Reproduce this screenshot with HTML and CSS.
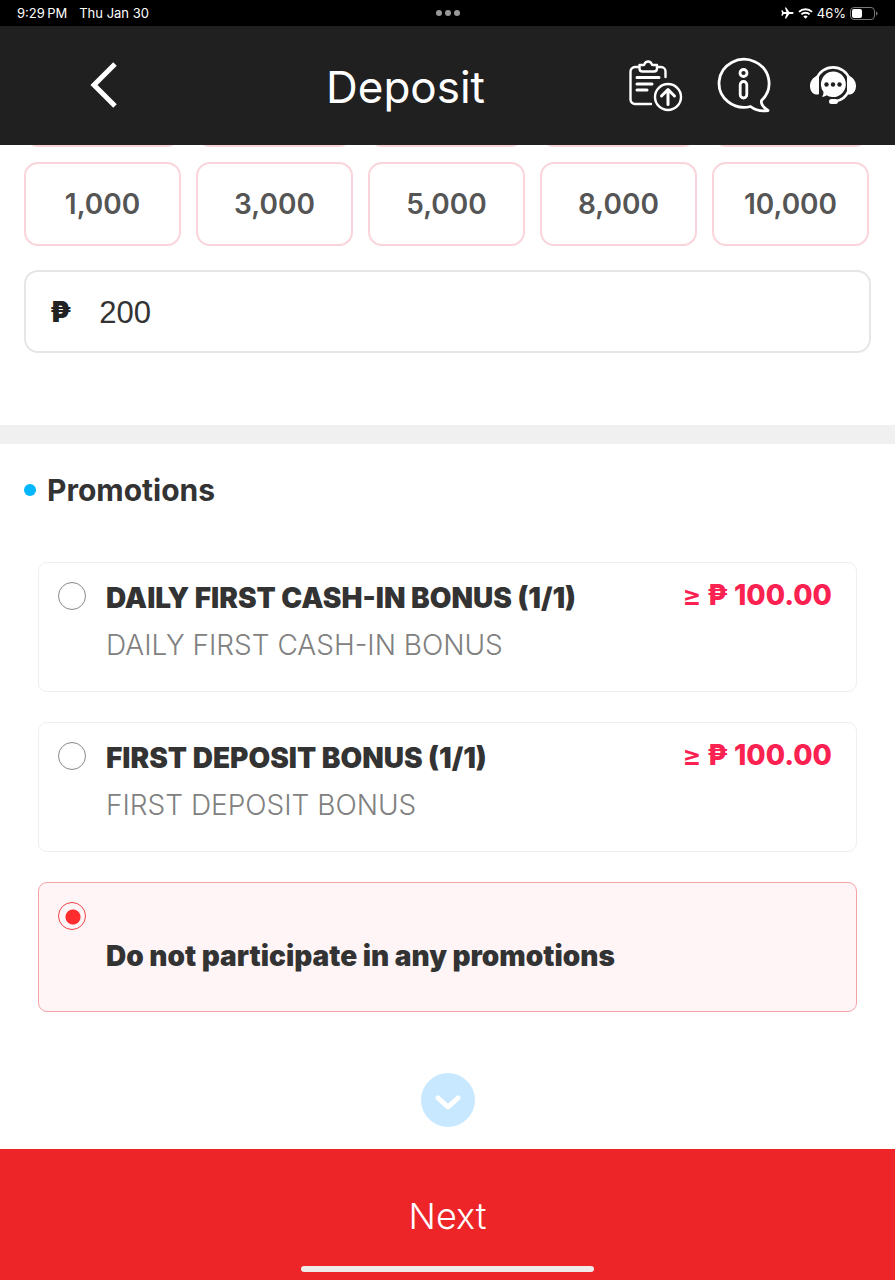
FILE: index.html
```html
<!DOCTYPE html>
<html lang="en">
<head>
<meta charset="utf-8">
<meta name="viewport" content="width=device-width, initial-scale=1">
<title>Deposit</title>
<link rel="stylesheet" href="styles.css">
</head>
<body>
<div class="app">
  <div class="status">
    <div class="status-left"><span>9:29&#8201;PM</span><span>Thu Jan 30</span></div>
    <div class="status-dots"><i></i><i></i><i></i></div>
    <div class="status-right">
      <svg width="13" height="12" viewBox="0 0 13 12" fill="#fff" aria-hidden="true"><path d="M12.6 6c0-.6-.8-1-1.700-1H8.300L5.200.4H3.900L5.400 5H2.700L1.500 3.300H.4L1 6 .4 8.700h1.100L2.700 7h2.700L3.900 11.600h1.300L8.300 7h2.600c.9 0 1.700-.4 1.700-1z"/></svg>
      <svg width="15" height="11" viewBox="0 0 15 11" fill="none" stroke="#fff" stroke-width="2" aria-hidden="true"><path d="M1 3.900a9.300 9.300 0 0 1 13 0M3.400 6.400a5.800 5.800 0 0 1 8.200 0"/><path d="M7.500 10.800 5.300 8.600a3.100 3.100 0 0 1 4.400 0z" fill="#fff" stroke="none"/></svg>
      <span>46%</span>
      <svg width="28" height="13" viewBox="0 0 28 13" aria-hidden="true"><rect x=".5" y=".5" width="24" height="12" rx="3.500" fill="none" stroke="#777"/><rect x="2" y="2" width="10" height="9" rx="2" fill="#fff"/><path d="M26 4.500c2 .6 2 3.400 0 4z" fill="#777"/></svg>
    </div>
  </div>

  <header class="header">
    <button class="icon-button" aria-label="Back">
      <svg width="28" height="46" viewBox="0 0 28 46" fill="none" stroke="#fff" stroke-width="5"><path d="M25 2 4 23l21 21"/></svg>
    </button>
    <h1 class="title">Deposit</h1>
    <div class="actions">
      <button class="icon-button" aria-label="Deposit records">
        <svg width="52" height="54" viewBox="1 0 52 54" fill="none" stroke="#fff" stroke-width="2.400" stroke-linecap="round" stroke-linejoin="round"><path d="M23 46H7a4.500 4.500 0 0 1-4.500-4.500V13.500A4.500 4.500 0 0 1 7 9h4M29 9h4a4.500 4.500 0 0 1 4.500 4.500V19"/><path d="M12 7h3.500c.8 0 1-.5 1.100-1.200a3.800 3.800 0 0 1 7 0c.1.700.3 1.200 1.100 1.200H29v3.500c0 2-1 3-3 3H14.500c-2 0-3-1-3-3V7z"/><path d="M9 19.500h22M9 26h15M9 32h10" stroke-width="3"/><circle cx="40" cy="39" r="13"/><path d="M40 46.500V32.500M33.500 38l6.500-6.500 6.500 6.500" stroke-width="3"/></svg>
      </button>
      <button class="icon-button" aria-label="Information">
        <svg width="56" height="56" viewBox="1 -2 56 56" fill="none" stroke="#fff" stroke-width="2.800" stroke-linejoin="round"><path d="M34.500 47.500A25 24 0 1 1 45.500 41.500C44.500 45.500 49 49.500 52 51.500 46 52.500 39 51 34.500 47.500z"/><circle cx="27.500" cy="14" r="3.500"/><rect x="24.200" y="22.500" width="6.600" height="16.500" rx="3.200"/></svg>
      </button>
      <button class="icon-button" aria-label="Customer support">
        <svg width="48" height="40" viewBox="0 0 48 40" fill="#fff"><path d="M10 10.500v18.500c-1 .6-2.500.6-4 .3C2.500 28 1 24.500 1 21s1.500-7 5.500-9.500c1-.7 2.500-1.200 3.500-1zM38 10.500v18.500c1 .6 2.500.6 4 .3 3.500-1.300 5-4.800 5-8.300s-1.500-7-5.500-9.500c-1-.7-2.500-1.200-3.500-1z"/><path d="M7.500 14A17.500 17.500 0 0 1 40.500 14M39.500 26A17.500 17.500 0 0 1 26 36.500" fill="none" stroke="#fff" stroke-width="2.600"/><rect x="20" y="34" width="9" height="5" rx="2.500"/><path d="M24 6.500a12.800 12.800 0 1 1-6.500 23.800c-1.200 1-2.700 1.600-4.500 1.500 1.200-1.500 1.700-3.200 1.400-5A12.800 12.800 0 0 1 24 6.500z"/><g fill="#202020"><circle cx="17.500" cy="19.500" r="2.200"/><circle cx="24" cy="19.500" r="2.200"/><circle cx="30.500" cy="19.500" r="2.200"/></g></svg>
      </button>
    </div>
  </header>

  <main class="content">
    <section class="amount-section">
      <div class="amounts amounts-tail" aria-hidden="true"><i></i><i></i><i></i><i></i><i></i></div>
      <div class="amounts">
        <button class="amount">1,000</button>
        <button class="amount">3,000</button>
        <button class="amount">5,000</button>
        <button class="amount">8,000</button>
        <button class="amount">10,000</button>
      </div>
      <div class="field">
        <label for="amount" class="peso">₱</label>
        <input id="amount" class="field-input" type="text" inputmode="decimal" value="200">
      </div>
    </section>

    <section class="promotions">
      <h2 class="section-title">Promotions</h2>
      <div class="cards">
        <label class="card">
          <input class="radio" type="radio" name="promotion">
          <span class="card-text"><strong>DAILY FIRST CASH-IN BONUS (1/1)</strong><span class="note">DAILY FIRST CASH-IN BONUS</span></span>
          <span class="price"><span class="gte">≥</span><span>₱ 100.00</span></span>
        </label>
        <label class="card">
          <input class="radio" type="radio" name="promotion">
          <span class="card-text"><strong>FIRST DEPOSIT BONUS (1/1)</strong><span class="note">FIRST DEPOSIT BONUS</span></span>
          <span class="price"><span class="gte">≥</span><span>₱ 100.00</span></span>
        </label>
        <label class="card selected">
          <input class="radio" type="radio" name="promotion" checked>
          <span class="card-text centered"><strong>Do not participate in any promotions</strong></span>
        </label>
      </div>
      <button class="more" aria-label="Show more">
        <svg width="28" height="18" viewBox="0 0 28 18" fill="none" stroke="#fff" stroke-width="5" stroke-linecap="round" stroke-linejoin="round"><path d="m4 4 10 9 10-9"/></svg>
      </button>
    </section>
  </main>

  <footer class="footer">
    <button class="next">Next</button>
    <div class="home-bar"></div>
  </footer>
</div>
</body>
</html>
```
FILE: styles.css
```css
* { box-sizing: border-box; }

body {
  margin: 0;
  background: #fff;
  color: #333;
  font-family: Inter, "Liberation Sans", sans-serif;
}

button {
  padding: 0;
  border: 0;
  background: none;
  color: inherit;
  font: inherit;
  cursor: pointer;
}

svg { display: block; overflow: visible; }

.app {
  display: flex;
  flex-direction: column;
  min-height: 100vh;
}

.status {
  display: grid;
  grid-template-columns: 1fr auto 1fr;
  align-items: center;
  height: 26px;
  padding: 0 17px;
  background: #000;
  color: #fff;
  font-size: 13px;
  font-weight: 400;
}

.status-left { display: flex; gap: 12px; }
.status-dots { display: flex; gap: 3px; }

.status-dots i {
  width: 6px;
  height: 6px;
  border-radius: 50%;
  background: #999;
}

.status-right {
  display: flex;
  justify-content: flex-end;
  align-items: center;
  gap: 4px;
}

.header {
  display: flex;
  align-items: center;
  height: 119px;
  padding: 0 38px 2px 90px;
  background: #202020;
  color: #fff;
}

.title {
  flex: 1;
  margin: 0;
  padding: 4px 0 0 64px;
  font-size: 44px;
  font-weight: 400;
  line-height: 56px;
  text-align: center;
}

.actions {
  display: flex;
  align-items: center;
  gap: 36px;
}

.content { flex: 1; }

.amount-section {
  padding: 0 24px 72px;
  border-bottom: 19px solid #f0f0f0;
}

.amounts {
  display: grid;
  grid-template-columns: repeat(5, 1fr);
  gap: 15px;
  padding-right: 2px;
}

.amounts-tail {
  height: 2px;
  margin-bottom: 15px;
  overflow: hidden;
  align-items: end;
  align-content: end;
}

.amounts-tail i,
.amount {
  height: 84px;
  border: 2px solid #f9d5db;
  border-radius: 14px;
}

.amount {
  color: #555;
  font-size: 28px;
  font-weight: 600;
}

.field {
  display: flex;
  align-items: center;
  gap: 28px;
  height: 83px;
  margin-top: 24px;
  padding: 0 24px;
  border: 2px solid #e6e6e6;
  border-radius: 14px;
}

.peso {
  color: #222;
  font-size: 28px;
  font-weight: 900;
}

.field-input {
  flex: 1;
  min-width: 0;
  padding: 2px 0 0;
  border: 0;
  outline: 0;
  background: none;
  color: #333;
  font-family: "Liberation Sans", sans-serif;
  font-size: 31px;
}

.promotions {
  display: flex;
  flex-direction: column;
  padding: 26px 38px 21px;
}

.section-title {
  display: flex;
  align-items: center;
  gap: 11px;
  margin: 0 0 52px -14px;
  font-size: 30px;
  font-weight: 700;
  line-height: 40px;
}

.section-title::before {
  content: "";
  width: 12px;
  height: 12px;
  border-radius: 50%;
  background: #00b7ff;
}

.cards {
  display: flex;
  flex-direction: column;
  gap: 30px;
}

.card {
  display: flex;
  align-items: flex-start;
  gap: 20px;
  height: 130px;
  padding: 19px 24px 19px 19px;
  border: 1px solid #eee;
  border-radius: 9px;
}

.card.selected {
  border-color: #f6a3a8;
  background: #fff5f6;
}

.radio {
  flex: none;
  width: 28px;
  height: 28px;
  margin: 0;
  border: 1px solid #888;
  border-radius: 50%;
  appearance: none;
}

.radio:checked {
  border-color: #ef4248;
  background: radial-gradient(circle at 14px 14px, #ff2d2d 7px, transparent 8px);
}

.card-text {
  display: flex;
  flex: 1;
  flex-direction: column;
  gap: 15px;
  font-size: 28px;
  line-height: 32px;
}

.card-text strong { font-weight: 900; }
.card-text.centered { align-self: center; padding-top: 18px; }
.note { color: #808080; font-weight: 300; }

.price {
  display: flex;
  gap: 6px;
  color: #fb2251;
  font-size: 28px;
  font-weight: 800;
  line-height: 26px;
}

.gte { font-weight: 600; line-height: 29px; }

.more {
  display: grid;
  place-items: center;
  align-self: center;
  width: 54px;
  height: 54px;
  margin-top: 61px;
  padding-top: 5px;
  border-radius: 50%;
  background: #c8e8ff;
}

.footer {
  display: flex;
  flex-direction: column;
  align-items: center;
  height: 131px;
  padding-bottom: 8px;
  background: #ed2529;
}

.next {
  flex: 1;
  width: 100%;
  padding-top: 16px;
  color: #fff;
  font-size: 36px;
  font-weight: 300;
}

.home-bar {
  width: 293px;
  height: 6px;
  border-radius: 3px;
  background: #f0eaea;
}
```
